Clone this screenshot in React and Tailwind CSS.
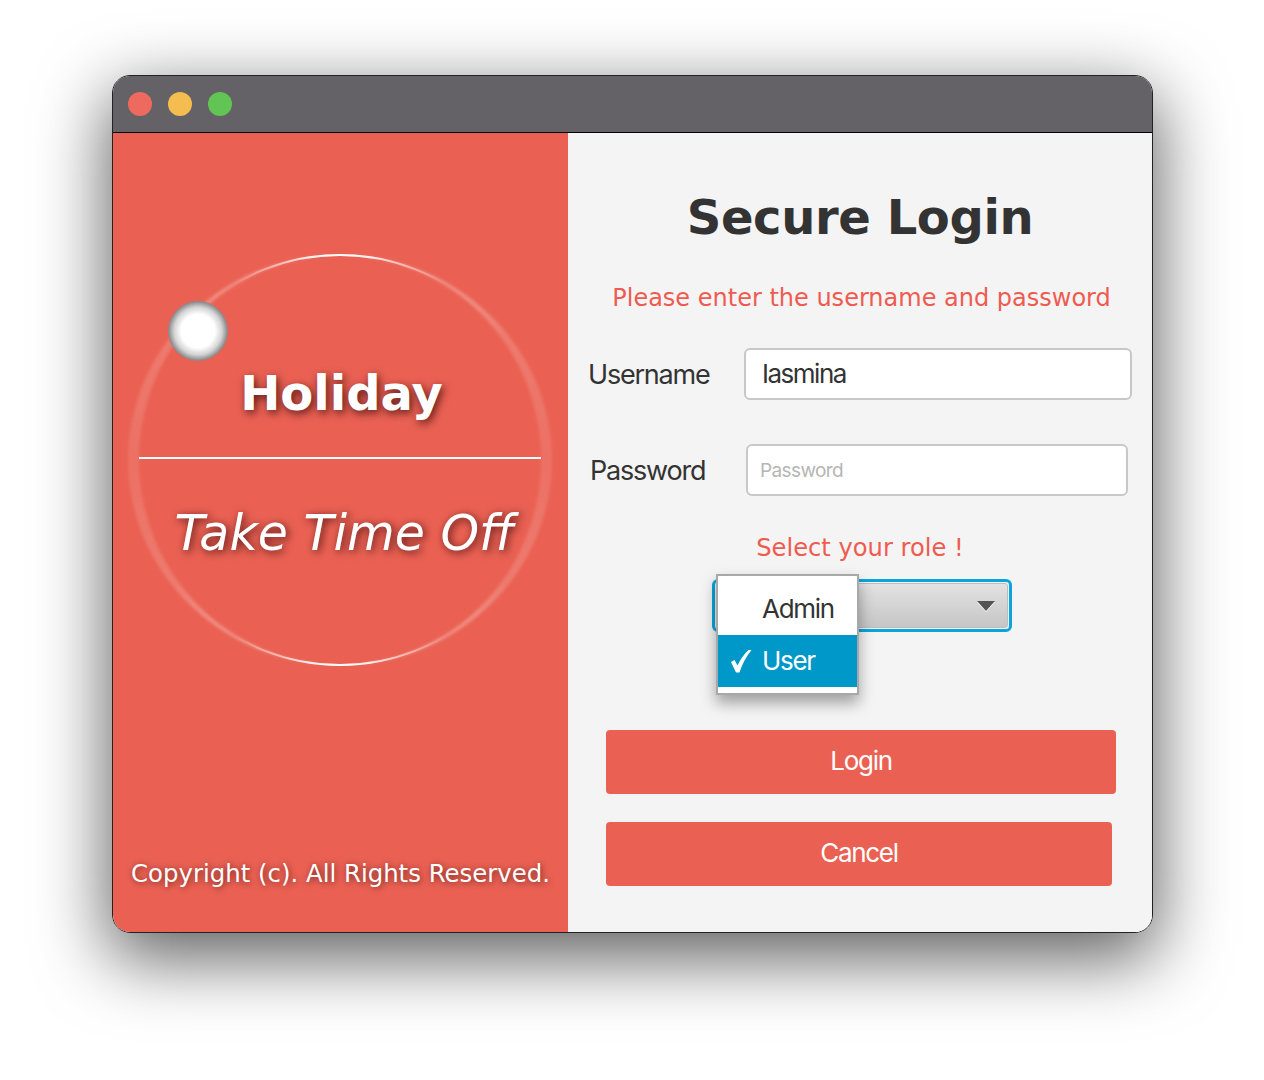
import React from 'react';

const sans = "font-['Inter','Roboto',sans-serif]";
const deja = "font-['DejaVu_Sans',sans-serif]";

function Ring() {
  return (
    <svg className="absolute left-[11px] top-[120px]" width="432" height="432" viewBox="0 0 432 432" fill="none">
      <defs>
        <linearGradient id="ringLine" x1="0" y1="0" x2="0" y2="1">
          <stop offset="0" stopColor="#fff" stopOpacity="1" />
          <stop offset="0.02" stopColor="#fff" stopOpacity="0.55" />
          <stop offset="0.07" stopColor="#fff" stopOpacity="0" />
          <stop offset="0.93" stopColor="#fff" stopOpacity="0" />
          <stop offset="0.98" stopColor="#fff" stopOpacity="0.55" />
          <stop offset="1" stopColor="#fff" stopOpacity="1" />
        </linearGradient>
        <linearGradient id="ringGlow" x1="0" y1="0" x2="0" y2="1">
          <stop offset="0" stopColor="#fff" stopOpacity="0.4" />
          <stop offset="0.2" stopColor="#fff" stopOpacity="0.16" />
          <stop offset="0.5" stopColor="#fff" stopOpacity="0.1" />
          <stop offset="0.8" stopColor="#fff" stopOpacity="0.16" />
          <stop offset="1" stopColor="#fff" stopOpacity="0.4" />
        </linearGradient>
        <filter id="soft" x="-5%" y="-5%" width="110%" height="110%">
          <feGaussianBlur stdDeviation="1.5" />
        </filter>
      </defs>
      <path
        fillRule="evenodd"
        fill="url(#ringGlow)"
        filter="url(#soft)"
        d="M4 207a212 205 0 1 0 424 0a212 205 0 1 0-424 0zM15 207a201 205 0 1 0 402 0a201 205 0 1 0-402 0z"
      />
      <circle cx="216" cy="207" r="205" stroke="url(#ringLine)" strokeWidth="2" />
    </svg>
  );
}

function TrafficLights() {
  return (
    <div className="flex gap-4 pl-[15px]">
      <span className="w-6 h-6 rounded-full bg-[#ee6a5f]" />
      <span className="w-6 h-6 rounded-full bg-[#f5bd4f]" />
      <span className="w-6 h-6 rounded-full bg-[#61c454]" />
    </div>
  );
}

function LeftPanel() {
  return (
    <div className="relative w-[455px] shrink-0 bg-[#ea6153] flex flex-col items-center text-white">
      <Ring />
      <div className="absolute left-[55px] top-[168px] w-[60px] h-[60px] rounded-full border border-[#8c8c8c] bg-[radial-gradient(closest-side,#ffffff_58%,#d4d4d4_82%,#909090_100%)]" />
      <h2 className={`relative mt-[229px] pl-[2px] h-[62px] leading-[62px] text-[48px] font-bold ${deja} [text-shadow:2px_3px_8px_rgba(60,10,10,0.85)]`}>Holiday</h2>
      <div className="relative mt-[33px] mr-[1px] w-[402px] h-[2px] bg-white" />
      <p className={`relative mt-[44px] pl-[8px] h-[62px] leading-[62px] text-[49px] italic ${deja} [text-shadow:2px_2px_8px_rgba(50,5,5,0.85)]`}>Take Time Off</p>
      <p className={`relative mt-auto mb-[43px] text-[24.4px] leading-[30px] whitespace-nowrap ${deja} [text-shadow:1px_1px_6px_rgba(60,10,10,0.7)]`}>Copyright (c). All Rights Reserved.</p>
    </div>
  );
}

function Field({ label, labelWidth, children, className }) {
  return (
    <div className={`flex items-center ${className}`}>
      <span className={`${labelWidth} pt-[3px] text-[27px] tracking-[-1.2px] whitespace-nowrap text-[#333] ${sans}`}>{label}</span>
      {children}
    </div>
  );
}

function RoleSelect() {
  return (
    <div className="relative ml-[144px] mt-[15px] w-[300px] h-[53px] rounded-[6px] border-[3px] border-[#0ba5dd] p-px">
      <div className="h-full rounded-[3px] border border-[#bdbdbd] bg-gradient-to-b from-[#e2e2e2] to-[#c6c6c6] flex items-center justify-end pr-[12px]">
        <svg className="mt-[1px] drop-shadow-[0_1px_0_#fff]" width="18" height="10" viewBox="0 0 18 10"><path d="M0 0h18l-9 10z" fill="#555" /></svg>
      </div>
      <div className={`absolute left-[1px] top-[-8px] w-[143px] h-[121px] bg-white border-2 border-[#a8a8a8] shadow-[0_8px_14px_rgba(0,0,0,0.35)] text-[26px] tracking-[-1.3px] ${sans}`}>
        <div className="h-[59px] pl-[44px] pt-[6px] flex items-center text-[#333]">Admin</div>
        <div className="h-[52px] pl-[44px] pb-[2px] flex items-center bg-[#0097c9] text-white relative">
          <svg className="absolute left-[12px] top-[14px]" width="22" height="24" viewBox="0 0 22 24">
            <path d="M1 13l3.500-2 3 5.500C10.500 10.500 14 5 18.500 1H21.500C16 8 12 15 9.500 23.500H6z" fill="#fff" />
          </svg>
          User
        </div>
      </div>
    </div>
  );
}

function RightPanel() {
  return (
    <div className="flex-1 bg-[#f4f4f4] flex flex-col">
      <h1 className={`mt-[51px] text-center text-[48px] tracking-[-0.4px] leading-[66px] font-bold text-[#333] ${deja}`}>Secure Login</h1>
      <p className={`mt-[32px] pl-[3px] text-center text-[24px] leading-[32px] text-[#ef5b50] ${deja}`}>Please enter the username and password</p>
      <Field label="Username" labelWidth="w-[121px]" className="mt-[34px] pl-[20px]">
        <div className={`ml-[35px] w-[388px] h-[52px] bg-white rounded-[6px] border-2 border-[#c8c8c8] pl-[16px] pb-[2px] flex items-center text-[26px] tracking-[-1.5px] text-[#333] ${sans}`}>Iasmina</div>
      </Field>
      <Field label="Password" labelWidth="w-[115px]" className="mt-[44px] pl-[22px]">
        <div className={`ml-[41px] w-[382px] h-[52px] bg-white rounded-[6px] border-2 border-[#c8c8c8] pl-[12px] pt-[2px] flex items-center text-[19px] tracking-[-0.6px] text-[#b5b5b5] ${sans}`}>Password</div>
      </Field>
      <p className={`mt-[36px] text-center text-[24.2px] leading-[32px] text-[#ef5b50] ${deja}`}>Select your role !</p>
      <RoleSelect />
      <button className={`mt-[98px] ml-[38px] w-[510px] h-[64px] pb-[4px] rounded-[4px] bg-[#ea6153] text-white text-[26px] tracking-[-1.3px] ${sans}`}>Login</button>
      <button className={`mt-[28px] ml-[38px] w-[506px] h-[64px] pb-[4px] rounded-[4px] bg-[#ea6153] text-white text-[26px] tracking-[-1.3px] ${sans}`}>Cancel</button>
    </div>
  );
}

export default function App() {
  return (
    <div className="h-[1080px] bg-white pt-[75px] pl-[112px] overflow-hidden">
      <div className="w-[1041px] h-[858px] flex flex-col rounded-[18px] border border-[#222] overflow-hidden shadow-[0_22px_70px_4px_rgba(0,0,0,0.62)]">
        <div className="h-[57px] shrink-0 bg-[#646266] border-b border-black flex items-center">
          <TrafficLights />
        </div>
        <div className="flex-1 flex min-h-0">
          <LeftPanel />
          <RightPanel />
        </div>
      </div>
    </div>
  );
}
